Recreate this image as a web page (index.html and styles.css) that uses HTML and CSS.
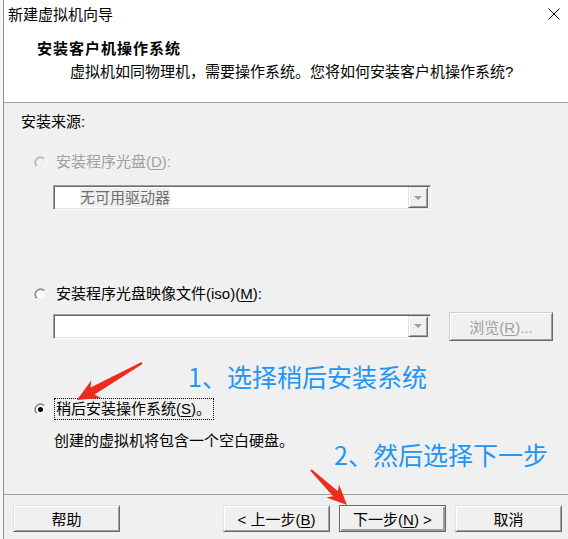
FILE: index.html
```html
<!DOCTYPE html>
<html lang="zh-CN">
<head>
    <meta charset="UTF-8">
    <title>新建虚拟机向导</title>
    <link rel="stylesheet" href="styles.css">
</head>
<body>
    <div class="window">
        <!-- Title bar -->
        <div class="titlebar">
            <span class="title">新建虚拟机向导</span>
            <svg class="close" width="12" height="12" viewBox="0 0 12 12">
                <path d="M0.5 0.5 L11.5 11.5 M11.5 0.5 L0.5 11.5" stroke="#000" stroke-width="1" fill="none"/>
            </svg>
        </div>

        <!-- Wizard header -->
        <div class="header">
            <div class="header-title">安装客户机操作系统</div>
            <div class="header-sub">虚拟机如同物理机，需要操作系统。您将如何安装客户机操作系统?</div>
        </div>

        <!-- Options -->
        <div class="content">
            <div class="section-label">安装来源:</div>

            <div class="option disabled opt-disc">
                <svg class="radio" width="13" height="13" viewBox="0 0 13 13">
                    <circle cx="6.5" cy="6.5" r="5.5" class="fill"/>
                    <path d="M2.26 10.74 A6 6 0 0 1 10.74 2.26" class="outer-d"/>
                    <path d="M10.74 2.26 A6 6 0 0 1 2.26 10.74" class="outer-l"/>
                    <path d="M2.96 10.04 A5 5 0 0 1 10.04 2.96" class="inner-d"/>
                    <path d="M10.04 2.96 A5 5 0 0 1 2.96 10.04" class="inner-l"/>
                </svg>
                <span class="opt-label">安装程序光盘(<u>D</u>):</span>
            </div>
            <div class="combo disabled combo-disc">
                <span class="combo-text"><span class="sel">无可用驱动器</span></span>
                <span class="combo-btn"><span class="tri"></span></span>
            </div>

            <div class="option opt-iso">
                <svg class="radio" width="13" height="13" viewBox="0 0 13 13">
                    <circle cx="6.5" cy="6.5" r="5.5" class="fill"/>
                    <path d="M2.26 10.74 A6 6 0 0 1 10.74 2.26" class="outer-d"/>
                    <path d="M10.74 2.26 A6 6 0 0 1 2.26 10.74" class="outer-l"/>
                    <path d="M2.96 10.04 A5 5 0 0 1 10.04 2.96" class="inner-d"/>
                    <path d="M10.04 2.96 A5 5 0 0 1 2.96 10.04" class="inner-l"/>
                </svg>
                <span class="opt-label">安装程序光盘映像文件(iso)(<u>M</u>):</span>
            </div>
            <div class="iso-row">
                <div class="combo">
                    <span class="combo-text"></span>
                    <span class="combo-btn"><span class="tri"></span></span>
                </div>
                <button class="btn browse" disabled>浏览(<u>R</u>)...</button>
            </div>

            <div class="option opt-later">
                <svg class="radio" width="13" height="13" viewBox="0 0 13 13">
                    <circle cx="6.5" cy="6.5" r="5.5" class="fill"/>
                    <path d="M2.26 10.74 A6 6 0 0 1 10.74 2.26" class="outer-d"/>
                    <path d="M10.74 2.26 A6 6 0 0 1 2.26 10.74" class="outer-l"/>
                    <path d="M2.96 10.04 A5 5 0 0 1 10.04 2.96" class="inner-d"/>
                    <path d="M10.04 2.96 A5 5 0 0 1 2.96 10.04" class="inner-l"/>
                    <circle cx="6.5" cy="6.5" r="2.5" fill="#000"/>
                </svg>
                <span class="opt-label focus">稍后安装操作系统(<u>S</u>)。</span>
            </div>
            <div class="desc">创建的虚拟机将包含一个空白硬盘。</div>
        </div>

        <!-- Buttons -->
        <div class="footer">
            <button class="btn">帮助</button>
            <div class="spacer"></div>
            <button class="btn">&lt; 上一步(<u>B</u>)</button>
            <button class="btn default">下一步(<u>N</u>) &gt;</button>
            <button class="btn">取消</button>
        </div>
    </div>

    <!-- Annotations drawn over the dialog -->
    <div class="note note-1">1、选择稍后安装系统</div>
    <div class="note note-2">2、然后选择下一步</div>
    <svg class="arrows" width="568" height="539" viewBox="0 0 568 539">
        <polygon fill="#ee2b1f" points="77,400 101,398 94.6,394.6 142.5,363.9 141.5,362.1 90.6,387.6 91.2,380.4"/>
        <polygon fill="#ee2b1f" points="347,505 339,484.6 337.9,491.3 311.7,469.3 310.3,470.7 333.1,496.3 326.4,497.6"/>
    </svg>
</body>
</html>
```

FILE: styles.css
```css
* {
    box-sizing: border-box;
    margin: 0;
    padding: 0;
}
body {
    font-family: 'Liberation Sans', 'Noto Sans CJK SC', sans-serif;
    font-size: 15px;
    line-height: 20px;
    color: #000;
    background-color: #f7f7f7;
    width: 568px;
    height: 539px;
    overflow: hidden;
    position: relative;
}
u {
    text-decoration: underline;
    text-underline-offset: 2px;
}
.window {
    margin-left: 3px;
    border-left: 1px solid #8f8f8f;
    height: 539px;
    display: flex;
    flex-direction: column;
    background-color: #f0f0f0;
}

/* Title bar */
.titlebar {
    height: 30px;
    background-color: #fff;
    display: flex;
    align-items: center;
    justify-content: space-between;
    padding: 0 8px 0 4px;
}
.close {
    margin-top: -2px;
}

/* Header */
.header {
    height: 72px;
    background-color: #fff;
    padding: 9px 0 0 33px;
}
.header-title {
    font-weight: bold;
    letter-spacing: 1px;
}
.header-sub {
    margin-top: 3px;
    padding-left: 33px;
}

/* Content */
.content {
    flex: 1;
    border-top: 1px solid #a0a0a0;
    padding: 9px 0 0 17px;
    display: flex;
    flex-direction: column;
    align-items: flex-start;
}
.option {
    display: flex;
    align-items: center;
    height: 20px;
    padding-left: 13px;
}
.opt-disc { margin-top: 20px; }
.opt-iso { margin-top: 74px; }
.opt-later { margin-top: 58px; height: 22px; }
.option.disabled { color: #a0a0a0; }

/* Radio drawn as svg */
.radio {
    flex: none;
    margin-right: 7px;
    fill: none;
    stroke-width: 1;
}
.radio .fill { fill: #fff; stroke: none; }
.radio .outer-d { stroke: #a0a0a0; }
.radio .outer-l { stroke: #fff; }
.radio .inner-d { stroke: #696969; }
.radio .inner-l { stroke: #e3e3e3; }
.option.disabled .radio .fill { fill: #f0f0f0; }
.option.disabled .radio .outer-d { stroke: #c8c8c8; }
.option.disabled .radio .inner-d { stroke: #a0a0a0; }
.option.disabled .radio .inner-l { stroke: #f0f0f0; }

.opt-label {
    border: 1px dotted transparent;
    padding: 0 2px 0 1px;
    line-height: 20px;
}
.opt-label.focus {
    border-color: #000;
}

.combo {
    flex: none;
    width: 378px;
    height: 25px;
    background-color: #fff;
    border: 1px solid;
    border-color: #a0a0a0 #fff #fff #a0a0a0;
    box-shadow: inset 1px 1px 0 #696969, inset -1px -1px 0 #e3e3e3;
    display: flex;
    align-items: center;
    padding: 2px;
}
.combo-disc {
    margin: 13px 0 0 32px;
}
.combo-text {
    flex: 1;
    padding-left: 24px;
    color: #6d6d6d;
}
.sel {
    background-color: #f0f0f0;
    padding: 1px 0;
}
.combo-btn {
    width: 20px;
    height: 21px;
    background-color: #f0f0f0;
    border: 1px solid;
    border-color: #e3e3e3 #696969 #696969 #e3e3e3;
    box-shadow: inset 1px 1px 0 #fff, inset -1px -1px 0 #a0a0a0;
    display: flex;
    align-items: center;
    justify-content: center;
}
.tri {
    width: 0;
    height: 0;
    border-left: 4px solid transparent;
    border-right: 4px solid transparent;
    border-top: 4px solid #a0a0a0;
}
.iso-row {
    display: flex;
    align-items: center;
    margin: 8px 0 0 32px;
    height: 28px;
}
.desc {
    margin: 11px 0 0 33px;
}

/* Buttons */
.btn {
    flex: none;
    font-family: inherit;
    font-size: 15px;
    color: #000;
    width: 107px;
    height: 27px;
    background-color: #f0f0f0;
    border: 1px solid;
    border-color: #e3e3e3 #696969 #696969 #e3e3e3;
    box-shadow: inset 1px 1px 0 #fff, inset -1px -1px 0 #a0a0a0;
}
.btn.default {
    border-color: #646464;
    box-shadow: inset 1px 1px 0 #fff, inset -2px -2px 0 #a0a0a0;
}
.browse {
    margin-left: 18px;
    width: 104px;
    height: 29px;
    color: #a0a0a0;
    border-color: #d0d0d0 #696969 #696969 #d0d0d0;
}
.footer {
    height: 45px;
    border-top: 1px solid #a0a0a0;
    display: flex;
    gap: 9px;
    padding: 10px 6px 0 9px;
}
.footer .spacer {
    flex: 1;
}

/* Annotations */
.note {
    position: absolute;
    font-family: 'Noto Sans CJK SC', sans-serif;
    font-size: 25px;
    line-height: 30px;
    color: #2196f3;
}
.note-1 {
    left: 188px;
    top: 361px;
}
.note-2 {
    left: 334px;
    top: 439px;
}
.arrows {
    position: absolute;
    left: 0;
    top: 0;
    pointer-events: none;
}
```
